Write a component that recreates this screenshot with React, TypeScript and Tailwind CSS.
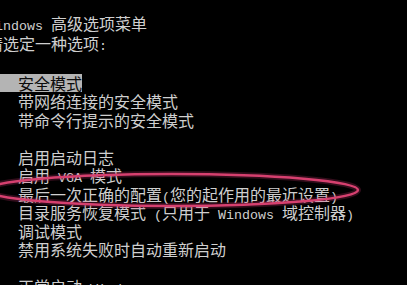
const Half = ({ children }: { children: React.ReactNode }) => (
  <span className="font-['Liberation_Mono'] text-[13.33px] whitespace-pre">
    {children}
  </span>
);

const Row = ({
  children,
  indent = true,
  selected = false,
}: {
  children?: React.ReactNode;
  indent?: boolean;
  selected?: boolean;
}) => (
  <div className="h-[18.5px] leading-[18.5px] whitespace-pre">
    <span
      className={
        selected
          ? "inline-block bg-[#b4b4b4] text-[#0c0c0c] pl-[31px]"
          : indent
          ? "inline-block pl-[31px]"
          : "inline-block"
      }
    >
      {children}
    </span>
  </div>
);

const BootMenu = () => {
  return (
    <div className="ml-[-13px] pt-[13px] text-[16px] text-[#cfcfcf] font-['Noto_Sans_CJK_SC',sans-serif]">
      <div className="h-[20px] leading-[20px] whitespace-pre">
        <Half>Windows </Half>高级选项菜单
      </div>
      <div className="h-[20px] leading-[20px] whitespace-pre">
        请选定一种选项<Half>:</Half>
      </div>
      <div className="h-[20.5px]" />
      <Row selected>安全模式</Row>
      <Row>带网络连接的安全模式</Row>
      <Row>带命令行提示的安全模式</Row>
      <Row />
      <Row>启用启动日志</Row>
      <Row>
        启用<Half> VGA </Half>模式
      </Row>
      <Row>
        最后一次正确的配置<Half>(</Half>您的起作用的最近设置<Half>)</Half>
      </Row>
      <Row>
        目录服务恢复模式<Half> (</Half>只用于<Half> Windows </Half>域控制器
        <Half>)</Half>
      </Row>
      <Row>调试模式</Row>
      <Row>禁用系统失败时自动重新启动</Row>
      <Row />
      <Row>
        正常启动<Half> Windows</Half>
      </Row>
    </div>
  );
};

const Highlight = () => (
  <svg
    className="absolute inset-0 pointer-events-none"
    width={407}
    height={285}
    viewBox="0 0 407 285"
  >
    <ellipse
      cx={172}
      cy={190}
      rx={186}
      ry={16}
      fill="none"
      stroke="#c8336a"
      strokeWidth={6}
      opacity={0.25}
    />
    <ellipse
      cx={172}
      cy={190}
      rx={186}
      ry={16}
      fill="none"
      stroke="#d6406f"
      strokeWidth={2.5}
    />
  </svg>
);

export default function App() {
  return (
    <div className="relative w-[407px] h-[285px] overflow-hidden bg-black">
      <BootMenu />
      <Highlight />
    </div>
  );
}
